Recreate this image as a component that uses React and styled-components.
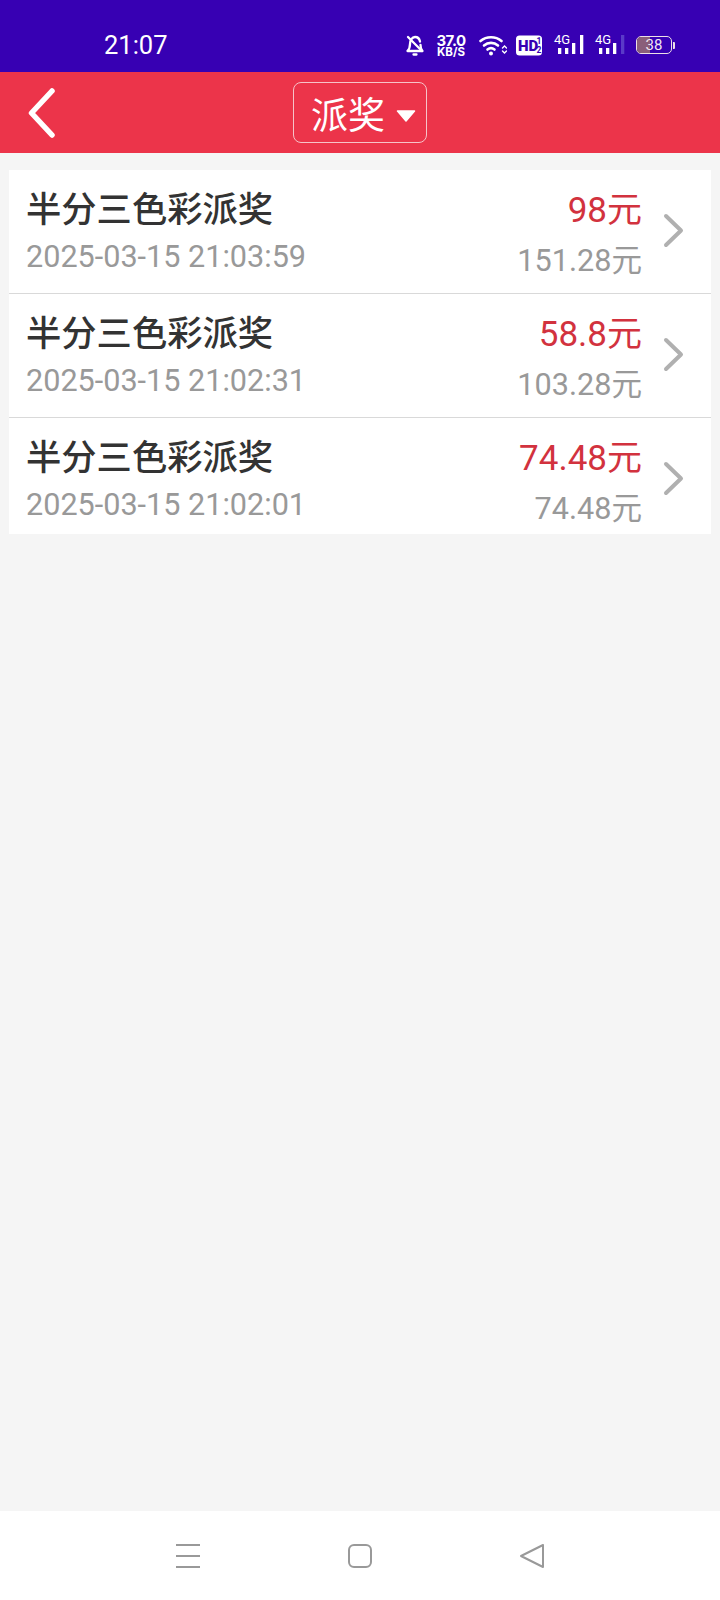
import styled, { createGlobalStyle } from 'styled-components'

const GlobalStyle = createGlobalStyle`
  html, body {
    margin: 0;
    padding: 0;
    background: #f5f5f5;
    font-family: Roboto, "Noto Sans CJK SC", sans-serif;
  }
`

const Screen = styled.div`
  width: 720px;
  height: 1600px;
  display: flex;
  flex-direction: column;
  background: #f5f5f5;
  overflow: hidden;
`

const StatusBar = styled.div`
  height: 72px;
  flex: none;
  background: #3700b3;
  color: #fff;
  display: flex;
  align-items: center;
  padding: 18px 0 0 104px;
  box-sizing: border-box;
`

const Clock = styled.div`
  font-size: 25.5px;
  line-height: 30px;
  width: 301px;
`

const StatusIcons = styled.div`
  display: flex;
  align-items: center;
`

const Speed = styled.div`
  width: 30px;
  margin: 0 13px 0 11px;
  text-align: center;
  font-family: Inter, sans-serif;
  font-weight: 700;
  font-size: 15px;
  line-height: 13px;
  letter-spacing: -0.5px;

  span {
    display: block;
    font-size: 11.5px;
    line-height: 10px;
    letter-spacing: 0;
  }
`

const Battery = styled.div`
  position: relative;
  width: 36px;
  height: 18px;
  margin-left: 11px;
  border: 1.5px solid #ecdfe6;
  border-radius: 5px;
  box-sizing: border-box;
  overflow: hidden;
  display: flex;
  align-items: center;
  justify-content: center;
  font-size: 15px;
  color: #f0e6f0;

  &::before {
    content: '';
    position: absolute;
    left: 0;
    top: 0;
    bottom: 0;
    width: 13px;
    background: #8a5f7a;
  }

  span {
    position: relative;
  }
`

const BatteryCap = styled.div`
  width: 2px;
  height: 7px;
  margin-left: 1px;
  background: #ecdfe6;
  border-radius: 0 1px 1px 0;
`

const Header = styled.header`
  height: 81px;
  flex: none;
  background: #ec344a;
  display: flex;
  align-items: center;
  justify-content: center;
  position: relative;
`

const BackButton = styled.div`
  position: absolute;
  left: 27px;
  top: 16px;
  width: 30px;
  height: 50px;
`

const TitleSelect = styled.div`
  width: 134px;
  height: 61px;
  border: 1px solid #f6c3c9;
  border-radius: 8px;
  box-sizing: border-box;
  display: flex;
  align-items: center;
  padding-left: 17px;
  color: #fff;
  font-size: 37px;
  gap: 11px;
`

const Caret = styled.svg`
  width: 20px;
  height: 12px;
  margin-top: 6px;
  flex: none;
`

const List = styled.div`
  flex: 1;
  padding-top: 17px;
`

const Card = styled.div`
  margin: 0 9px;
  background: #fff;
`

const Row = styled.div`
  height: ${(p) => (p.$last ? 116 : 124)}px;
  box-sizing: border-box;
  padding: 15px 0 0 17px;
  display: flex;
  border-bottom: ${(p) => (p.$last ? 'none' : '1px solid #d9d9d9')};
`

const Info = styled.div`
  flex: 1;
`

const Name = styled.div`
  font-size: 35.3px;
  font-weight: 500;
  line-height: 50px;
  color: #333;
`

const Time = styled.div`
  font-size: 30.6px;
  line-height: 40px;
  margin-top: 2px;
  color: #999;
`

const Amounts = styled.div`
  text-align: right;
`

const Prize = styled.div`
  font-size: 35px;
  line-height: 50px;
  margin-top: 1px;
  color: #d2323e;
`

const Balance = styled.div`
  margin-top: 2px;
  font-size: 30.6px;
  line-height: 46px;
  color: #999;
`

const Chevron = styled.svg`
  width: 24px;
  height: 36px;
  margin: 28px 24px 0 21px;
  flex: none;
`

const NavBar = styled.nav`
  height: 89px;
  flex: none;
  background: #fff;
  display: flex;
  align-items: center;
  justify-content: center;
  gap: 148px;
  box-sizing: border-box;
`

const BellIcon = () => (
  <svg width="20" height="22" viewBox="0 0 20 22" fill="none" stroke="#fff" strokeWidth="2.300" strokeLinecap="round" strokeLinejoin="round">
    <path d="M2.500 17c1.500-1.500 2.500-3.500 2.500-7 0-3.500 2-7 5-7s4.500 2 5 4.500M15.500 11c0 3 .5 4.500 2 6h-15" />
    <path d="M3 3l14 14" />
    <path d="M8.500 20.500h3" />
  </svg>
)

const WifiIcon = () => (
  <svg width="28" height="22" viewBox="0 0 28 22" fill="none" stroke="#fff" strokeWidth="2.600" strokeLinecap="round">
    <path d="M1.500 7c6-5 15-5 21 0" />
    <path d="M5 11.500c4-3.500 10-3.500 14 0" />
    <path d="M8.500 15.500c2-1.600 5-1.600 7 0" />
    <circle cx="12" cy="19.500" r="2" fill="#fff" stroke="none" />
    <path d="M23.500 14l2-2 2 2M23.500 17l2 2 2-2" strokeWidth="1.400" />
  </svg>
)

const HdIcon = () => (
  <svg width="26" height="21" viewBox="0 0 26 21">
    <rect width="26" height="20" y="0.500" rx="3.500" fill="#fff" />
    <text x="2" y="16" fontFamily="Roboto, sans-serif" fontWeight="900" fontSize="15" fill="#3700b3">HD</text>
    <text x="20.500" y="9" fontFamily="Roboto, sans-serif" fontWeight="700" fontSize="8.500" fill="#3700b3">1</text>
    <text x="20.500" y="17.500" fontFamily="Roboto, sans-serif" fontWeight="700" fontSize="8.500" fill="#3700b3">2</text>
  </svg>
)

const SignalWrap = styled.svg`
  width: 30px;
  height: 22px;
  margin-left: ${(p) => p.$gap}px;
  overflow: visible;
`

// bars past `level` are drawn dimmed
const SignalIcon = ({ level, gap }) => (
  <SignalWrap $gap={gap} viewBox="0 0 30 22">
    <text x="0" y="10" fontFamily="Roboto, sans-serif" fontSize="13" fill="#fff">4G</text>
    {[[4, 14, 6], [11, 14, 6], [18, 9, 11], [26, 1, 19]].map(([x, y, h], i) => (
      <rect key={x} x={x} y={y} width="3.300" height={h} fill={i < level ? '#fff' : '#5a3ac8'} />
    ))}
  </SignalWrap>
)

function Item({ time, prize, balance, last }) {
  return (
    <Row $last={last}>
      <Info>
        <Name>半分三色彩派奖</Name>
        <Time>{time}</Time>
      </Info>
      <Amounts>
        <Prize>{prize}元</Prize>
        <Balance>{balance}元</Balance>
      </Amounts>
      <Chevron viewBox="0 0 24 36" fill="none" stroke="#b0b0b0" strokeWidth="4" strokeLinecap="round" strokeLinejoin="round">
        <path d="M3 3l15 14.500L3 32" />
      </Chevron>
    </Row>
  )
}

const WifiGap = styled.div`
  width: 9px;
`

export default function App() {
  return (
    <Screen>
      <GlobalStyle />
      <StatusBar>
        <Clock>21:07</Clock>
        <StatusIcons>
          <BellIcon />
          <Speed>37.0<span>KB/S</span></Speed>
          <WifiIcon />
          <WifiGap />
          <HdIcon />
          <SignalIcon level={4} gap={12} />
          <SignalIcon level={3} gap={11} />
          <Battery><span>38</span></Battery>
          <BatteryCap />
        </StatusIcons>
      </StatusBar>
      <Header>
        <BackButton>
          <svg width="30" height="50" viewBox="0 0 30 50" fill="none" stroke="#fff" strokeWidth="5.500" strokeLinecap="round" strokeLinejoin="round">
            <path d="M25 3L4.500 25 25 47" />
          </svg>
        </BackButton>
        <TitleSelect>
          派奖
          <Caret viewBox="0 0 20 12">
            <path d="M1.500 1h17L10 11z" fill="#fff" stroke="#fff" strokeWidth="1.500" strokeLinejoin="round" />
          </Caret>
        </TitleSelect>
      </Header>
      <List>
        <Card>
          <Item time="2025-03-15 21:03:59" prize="98" balance="151.28" />
          <Item time="2025-03-15 21:02:31" prize="58.8" balance="103.28" />
          <Item time="2025-03-15 21:02:01" prize="74.48" balance="74.48" last />
        </Card>
      </List>
      <NavBar>
        <svg width="24" height="24" viewBox="0 0 24 24" stroke="#999" strokeWidth="2">
          <path d="M0 1h24M0 12h24M0 23h24" />
        </svg>
        <svg width="24" height="24" viewBox="0 0 24 24" fill="none" stroke="#999" strokeWidth="2">
          <rect x="1" y="1" width="22" height="22" rx="5" />
        </svg>
        <svg width="24" height="24" viewBox="0 0 24 24" fill="none" stroke="#999" strokeWidth="2" strokeLinejoin="round">
          <path d="M23 1v22L1 12z" />
        </svg>
      </NavBar>
    </Screen>
  )
}
